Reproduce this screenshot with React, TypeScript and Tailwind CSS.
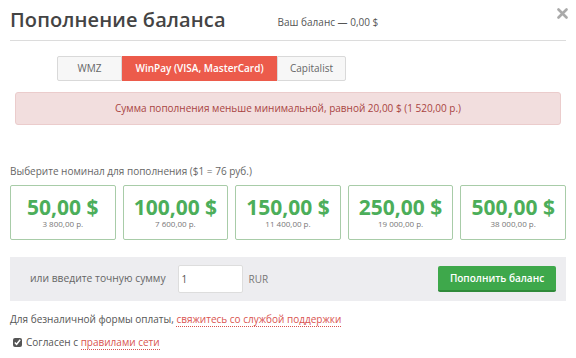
import { useState } from "react";

const amounts = [
    { usd: "50,00 $", rub: "3 800,00 р." },
    { usd: "100,00 $", rub: "7 600,00 р." },
    { usd: "150,00 $", rub: "11 400,00 р." },
    { usd: "250,00 $", rub: "19 000,00 р." },
    { usd: "500,00 $", rub: "38 000,00 р." },
];

const tabs = [
    { name: "WMZ", width: "w-[65px] rounded-l-[2px]" },
    { name: "WinPay (VISA, MasterCard)", width: "w-[155px]" },
    { name: "Capitalist", width: "w-[69px] rounded-r-[2px]" },
];

export default function App() {
    const [active, setActive] = useState(1);
    const [sum, setSum] = useState("1");
    const [agree, setAgree] = useState(true);

    return (
        <div
            className="w-[576px] h-[358px] bg-white overflow-hidden text-[#555]"
            style={{ fontFamily: '"Open Sans", "Noto Sans", sans-serif' }}
        >
            {/* Шапка */}
            <div className="relative mx-[10px] h-[41px] border-b border-[#dcdcdc] flex items-end pb-[7px]">
                <h1 className="text-[20px] leading-[26px] font-semibold text-[#444] tracking-[0.1px]">
                    Пополнение баланса
                </h1>
                <span className="ml-[52px] mb-[3px] text-[10px] text-[#555]">Ваш баланс — 0,00 $</span>
                <button className="absolute right-[-2px] top-[8px] text-[#aaa]">
                    <svg width="11" height="11" viewBox="0 0 11 11">
                        <path d="M1.5 1.5 L9.5 9.5 M9.5 1.5 L1.5 9.5" stroke="currentColor" strokeWidth="2.6" strokeLinecap="round" />
                    </svg>
                </button>
            </div>

            {/* Способы оплаты */}
            <div className="flex pl-[57px] mt-[15px]">
                {tabs.map((t, i) => (
                    <button
                        key={t.name}
                        onClick={() => setActive(i)}
                        className={
                            "h-[25px] text-[10px] border " +
                            t.width +
                            (i === active
                                ? " font-semibold text-white bg-[#ec5b4b] border-[#ec5b4b]"
                                : " text-[#666] bg-[#f7f7f7] border-[#d9d9d9]")
                        }
                    >
                        {t.name}
                    </button>
                ))}
            </div>

            {/* Ошибка */}
            <div className="mx-[15px] mt-[11px] h-[33px] rounded-[3px] bg-[#f2dede] border border-[#ebcccc] flex items-center justify-center text-[10px] text-[#a94442]">
                Сумма пополнения меньше минимальной, равной 20,00 $ (1 520,00 р.)
            </div>

            {/* Номиналы */}
            <div className="mx-[10px] mt-[39px] text-[10px] text-[#666]">
                Выберите номинал для пополнения ($1 = 76 руб.)
            </div>
            <div className="mx-[10px] mt-[6px] flex gap-[7px]">
                {amounts.map((a) => (
                    <button
                        key={a.usd}
                        onClick={() => setSum(a.rub.replace(/\s|р\./g, ""))}
                        className="w-[106px] h-[55px] rounded-[2px] border border-[#a8cca8] bg-white flex flex-col items-center justify-center"
                    >
                        <span className="text-[21px] leading-[20px] font-bold text-[#4cae5a]">{a.usd}</span>
                        <span className="mt-[2px] text-[8px] leading-[9px] text-[#777]">{a.rub}</span>
                    </button>
                ))}
            </div>

            {/* Точная сумма */}
            <div className="mx-[10px] mt-[17px] h-[44px] bg-[#ededf0] flex items-center pl-[20px] pr-[10px]">
                <span className="text-[10.3px] text-[#666]">или введите точную сумму</span>
                <input
                    value={sum}
                    onChange={(e) => setSum(e.target.value)}
                    className="ml-[12px] w-[65px] h-[28px] bg-white border border-[#ddd] rounded-[2px] px-[3px] text-[10px] text-[#555] outline-none"
                />
                <span className="ml-[6px] text-[10px] text-[#777]">RUR</span>
                <button className="ml-auto w-[118px] h-[26px] rounded-[2px] bg-[#3ea84b] border-b-2 border-[#2f8a3a] text-white text-[10px] font-semibold">
                    Пополнить баланс
                </button>
            </div>

            <div className="mx-[10px] mt-[11px] text-[10px] text-[#555]">
                Для безналичной формы оплаты,{" "}
                <a href="#" className="text-[#d9534f] border-b border-dotted border-[#d9534f]">
                    свяжитесь со службой поддержки
                </a>
            </div>

            <label className="mx-[13px] mt-[8px] flex items-center gap-[4px] text-[10px] text-[#555]">
                <input
                    type="checkbox"
                    checked={agree}
                    onChange={(e) => setAgree(e.target.checked)}
                    className="w-[9px] h-[9px] accent-[#555]"
                />
                <span>
                    Согласен с{" "}
                    <a href="#" className="text-[#d9534f] border-b border-dotted border-[#d9534f]">
                        правилами сети
                    </a>
                </span>
            </label>
        </div>
    );
}
